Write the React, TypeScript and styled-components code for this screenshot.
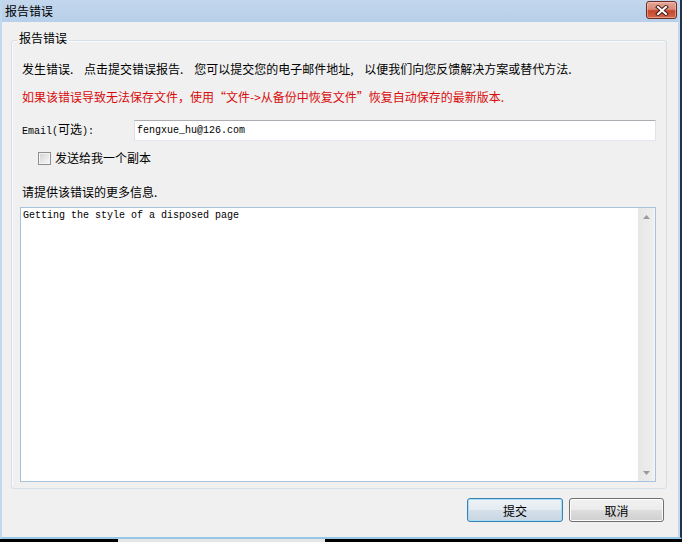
import React from "react";
import styled, { createGlobalStyle } from "styled-components";

const GlobalStyle = createGlobalStyle`
  html, body { margin: 0; padding: 0; background: #000; }
  body { font-family: "Noto Sans CJK SC", "Liberation Sans", sans-serif; }
  * { box-sizing: border-box; }
`;

const Window = styled.div`
  width: 682px;
  height: 542px;
  display: flex;
  flex-direction: column;
  overflow: hidden;
`;

const Frame = styled.div`
  height: 539px;
  display: flex;
  flex-direction: column;
  border-left: 2px solid #c2d8ee;
  border-right: 2px solid #22344c;
  border-bottom: 2px solid #98c8e8;
  padding-right: 2px;
  background: #c4d9ee;
`;

const BottomStrip = styled.div`
  height: 3px;
  background: linear-gradient(
    to right,
    #000 118px,
    #e6e6e6 118px,
    #e6e6e6 325px,
    #000 325px
  );
`;

const TitleBar = styled.div`
  height: 22px;
  flex: none;
  display: flex;
  justify-content: space-between;
  align-items: center;
  padding-left: 3px;
  background: linear-gradient(#c3d7ec, #b7cfe9);
`;

const Title = styled.span`
  font-size: 12px;
  line-height: 16px;
  color: #000;
`;

const CloseButton = styled.div`
  width: 31px;
  height: 18px;
  align-self: flex-start;
  margin-top: 1px;
  margin-right: 1px;
  border: 1px solid #6a2b22;
  border-radius: 3px;
  background: linear-gradient(#e6a898 0%, #d88a77 45%, #c5462c 55%, #d2684a 100%);
  box-shadow: inset 0 0 0 1px rgba(255, 220, 210, 0.45);
  display: flex;
  align-items: center;
  justify-content: center;
`;

const Body = styled.div`
  flex: 1;
  display: flex;
  flex-direction: column;
  background: #f0f0f0;
  padding: 18px 11px 0 9px;
`;

const Group = styled.div`
  position: relative;
  height: 449px;
  display: flex;
  flex-direction: column;
  border: 1px solid #d5dfe5;
  border-radius: 3px;
  box-shadow: inset 1px 1px 0 #fbfbfb;
  padding: 20px 10px 6px 10px;
`;

const Legend = styled.span`
  position: absolute;
  top: -11px;
  left: 5px;
  padding: 0 2px;
  background: #f0f0f0;
  font-size: 12px;
  line-height: 16px;
  color: #000;
`;

const Para = styled.p<{ $warn?: boolean; $gap: number }>`
  margin: ${(p) => p.$gap}px 0 0 0;
  font-size: 12px;
  line-height: 16px;
  height: 16px;
  white-space: pre;
  color: ${(p) => (p.$warn ? "#d80c0c" : "#000")};
`;

const EmailRow = styled.div`
  margin-top: 15px;
  height: 21px;
  display: flex;
  align-items: center;
`;

const FieldLabel = styled.span`
  width: 112px;
  flex: none;
  font-family: "Liberation Mono", "Noto Sans CJK SC", monospace;
  font-size: 10px;
  line-height: 16px;
  color: #000;
`;

const Cjk = styled.span`
  font-family: "Noto Sans CJK SC", sans-serif;
  font-size: 12px;
`;

const Input = styled.input`
  flex: 1;
  height: 21px;
  margin: 0;
  padding: 0 2px;
  border: 1px solid;
  border-color: #abadb3 #e2e3ea #e3e9ef #dbdfe6;
  background: #fff;
  font-family: "Liberation Mono", monospace;
  font-size: 10px;
  color: #000;
  outline: none;
`;

const CheckRow = styled.div`
  margin-top: 9px;
  height: 16px;
  display: flex;
  align-items: center;
  gap: 4px;
  padding-left: 16px;
`;

const CheckBox = styled.span`
  width: 13px;
  height: 13px;
  border: 1px solid #8e8f8f;
  background: linear-gradient(135deg, #cfd2d6 0%, #eeeeee 70%, #f8f8f8 100%);
  box-shadow: inset 0 0 0 1px #f4f4f4;
`;

const CheckText = styled.span`
  font-size: 12px;
  line-height: 16px;
  color: #000;
`;

const TextBox = styled.div`
  margin: 7px 0 0 -2px;
  height: 275px;
  display: flex;
  border: 1px solid #a7c2db;
  background: #fff;
`;

const TextContent = styled.div`
  flex: 1;
  padding: 2px 2px;
  font-family: "Liberation Mono", monospace;
  font-size: 10px;
  line-height: 12px;
  color: #000;
  white-space: pre;
`;

const ScrollBar = styled.div`
  width: 17px;
  flex: none;
  display: flex;
  flex-direction: column;
  justify-content: space-between;
  background: linear-gradient(to right, #e7e7e7, #ededed 80%, #f4f4f4);
`;

const Arrow = styled.div`
  height: 17px;
  display: flex;
  align-items: center;
  justify-content: center;
`;

const ButtonRow = styled.div`
  margin-top: 9px;
  padding-right: 3px;
  display: flex;
  justify-content: flex-end;
  gap: 6px;
`;

const Button = styled.div<{ $primary?: boolean; $w: number }>`
  width: ${(p) => p.$w}px;
  height: 24px;
  display: flex;
  align-items: center;
  justify-content: center;
  font-size: 12px;
  color: #000;
  border-radius: 3px;
  border: 1px solid ${(p) => (p.$primary ? "#3c7fb1" : "#707070")};
  background: ${(p) =>
    p.$primary
      ? "linear-gradient(#eef3f7 0%, #e4ebf1 48%, #d4dfe8 52%, #c9d7e3 100%)"
      : "linear-gradient(#f2f2f2 0%, #ebebeb 48%, #dddddd 52%, #cfcfcf 100%)"};
  box-shadow: inset 0 0 0 1px ${(p) => (p.$primary ? "#a6def5" : "#fcfcfc")};
`;

const TriangleUp = () => (
  <svg width="7" height="4" viewBox="0 0 7 4">
    <path d="M0 4 L3.5 0 L7 4 Z" fill="#9a9a9a" />
  </svg>
);

const TriangleDown = () => (
  <svg width="7" height="4" viewBox="0 0 7 4">
    <path d="M0 0 L3.5 4 L7 0 Z" fill="#9a9a9a" />
  </svg>
);

const CloseGlyph = () => (
  <svg width="14" height="11" viewBox="0 0 14 11">
    <path d="M3 2 L11 9 M11 2 L3 9" stroke="#4a1d16" strokeWidth="4" strokeLinecap="square" />
    <path d="M3 2 L11 9 M11 2 L3 9" stroke="#ffffff" strokeWidth="2" strokeLinecap="square" />
  </svg>
);

export default function App() {
  return (
    <>
      <GlobalStyle />
      <Window>
        <Frame>
          <TitleBar>
            <Title>报告错误</Title>
            <CloseButton>
              <CloseGlyph />
            </CloseButton>
          </TitleBar>
          <Body>
            <Group>
              <Legend>报告错误</Legend>
              <Para $gap={0}>
                {"发生错误.    点击提交错误报告.    您可以提交您的电子邮件地址,    以便我们向您反馈解决方案或替代方法."}
              </Para>
              <Para $gap={12} $warn>
                如果该错误导致无法保存文件，使用“文件-&gt;从备份中恢复文件”恢复自动保存的最新版本.
              </Para>
              <EmailRow>
                <FieldLabel>
                  Email(<Cjk>可选</Cjk>):
                </FieldLabel>
                <Input readOnly value="fengxue_hu@126.com" />
              </EmailRow>
              <CheckRow>
                <CheckBox />
                <CheckText>发送给我一个副本</CheckText>
              </CheckRow>
              <Para $gap={18}>请提供该错误的更多信息.</Para>
              <TextBox>
                <TextContent>Getting the style of a disposed page</TextContent>
                <ScrollBar>
                  <Arrow>
                    <TriangleUp />
                  </Arrow>
                  <Arrow>
                    <TriangleDown />
                  </Arrow>
                </ScrollBar>
              </TextBox>
            </Group>
            <ButtonRow>
              <Button $primary $w={96}>提交</Button>
              <Button $w={95}>取消</Button>
            </ButtonRow>
          </Body>
        </Frame>
        <BottomStrip />
      </Window>
    </>
  );
}
